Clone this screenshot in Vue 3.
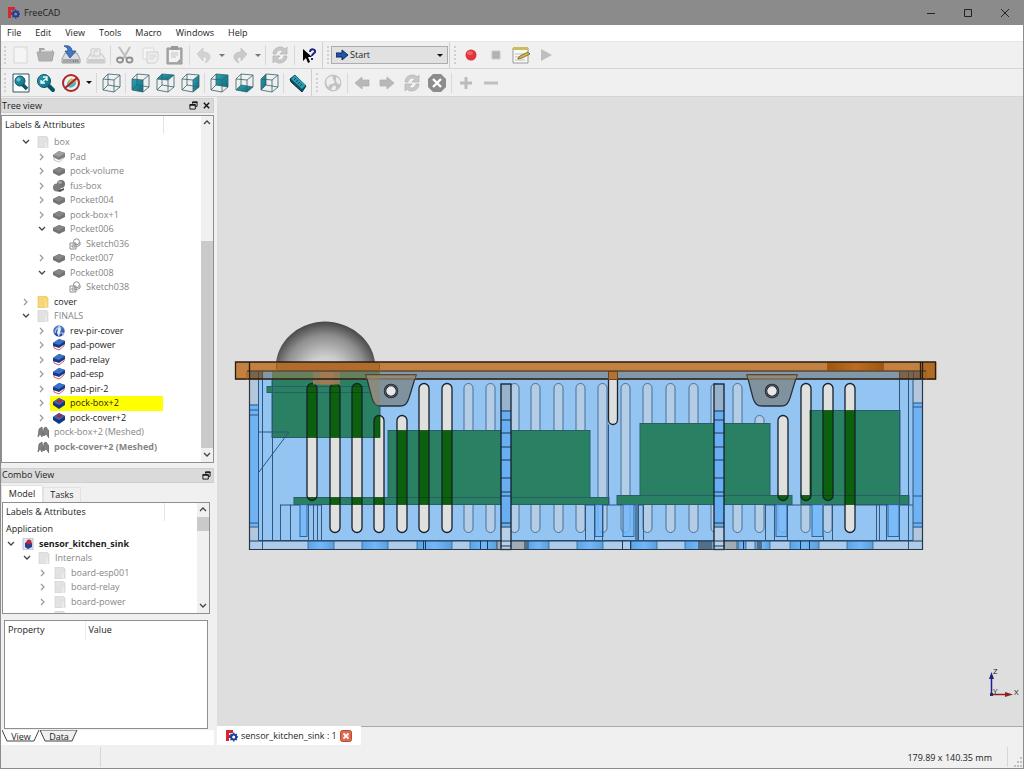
<script setup>
import { ref } from 'vue'

const menus = ['File', 'Edit', 'View', 'Tools', 'Macro', 'Windows', 'Help']

const fileTools = ['new', 'open', 'save', 'saveas', '|', 'cut', 'copy', 'paste', '|', 'undo', 'v', 'redo', 'v', '|', 'refresh', '|', 'whats']
const macroTools = ['record', 'stop', 'edit', 'play']
const viewTools = ['fit', 'zoom', 'nodraw', 'V', '|', 'iso', '|', 'front', 'top', 'right', '|', 'rear', 'bottom', 'left', '|', 'measure']
const webTools = ['globe', '|', 'back', 'forward', 'refresh', 'close', '|', 'plus', 'minus']

const tree = [
  { d: 1, open: true, icon: 'folderGrey', t: 'box', off: true },
  { d: 2, icon: 'padGrey', t: 'Pad', off: true },
  { d: 2, icon: 'pockGrey', t: 'pock-volume', off: true },
  { d: 2, icon: 'fuse', t: 'fus-box', off: true },
  { d: 2, icon: 'pockGrey', t: 'Pocket004', off: true },
  { d: 2, icon: 'pockGrey', t: 'pock-box+1', off: true },
  { d: 2, open: true, icon: 'pockGrey', t: 'Pocket006', off: true },
  { d: 3, leaf: true, icon: 'sketch', t: 'Sketch036', off: true },
  { d: 2, icon: 'pockGrey', t: 'Pocket007', off: true },
  { d: 2, open: true, icon: 'pockGrey', t: 'Pocket008', off: true },
  { d: 3, leaf: true, icon: 'sketch', t: 'Sketch038', off: true },
  { d: 1, icon: 'folder', t: 'cover' },
  { d: 1, open: true, icon: 'folderGrey', t: 'FINALS', off: true },
  { d: 2, icon: 'rev', t: 'rev-pir-cover' },
  { d: 2, icon: 'pad', t: 'pad-power' },
  { d: 2, icon: 'pad', t: 'pad-relay' },
  { d: 2, icon: 'pad', t: 'pad-esp' },
  { d: 2, icon: 'pad', t: 'pad-pir-2' },
  { d: 2, icon: 'pock', t: 'pock-box+2', hot: true },
  { d: 2, icon: 'pock', t: 'pock-cover+2' },
  { d: 1, leaf: true, icon: 'mesh', t: 'pock-box+2 (Meshed)', off: true },
  { d: 1, leaf: true, icon: 'mesh', t: 'pock-cover+2 (Meshed)', off: true, bold: true }
]

const model = [
  { d: 0, open: true, icon: 'doc', t: 'sensor_kitchen_sink', bold: true },
  { d: 1, open: true, icon: 'folderGrey', t: 'Internals', off: true },
  { d: 2, icon: 'folderGrey', t: 'board-esp001', off: true },
  { d: 2, icon: 'folderGrey', t: 'board-relay', off: true },
  { d: 2, icon: 'folderGrey', t: 'board-power', off: true },
  { d: 2, open: true, icon: 'folderGrey', t: 'board-pir', off: true }
]

const workbench = ref('Start')

// Vent slots: centre x, top, bottom
const cutSlots = [
  [312, 383, 500], [335, 383, 532], [357, 383, 532], [379, 415, 532], [402, 415, 532],
  [424, 383, 532], [447, 383, 532], [783, 415, 500], [806, 383, 500], [828, 383, 500], [850, 383, 532]
]
const farSlots = [469, 491, 515, 536, 559, 581, 603, 626, 648, 671, 694, 716, 738]
  .map(x => [x, 383, 532]).concat([[760, 415, 532], [783, 470, 532], [806, 470, 532], [828, 470, 532]])

// Circuit boards: x, y, width, height
const boards = [
  [272, 371, 108, 66], [267, 386, 113, 6], [388, 430, 202, 67], [294, 497, 315, 7],
  [640, 423, 130, 72], [617, 495, 175, 9], [810, 410, 90, 85], [801, 495, 108, 9]
]
const posts = [501, 714]
const rungs = [410, 419, 432, 446, 459, 477, 491, 495, 522, 526, 540, 545]
const feet = [[308, 26], [362, 26], [417, 35], [470, 27], [528, 21], [577, 26], [631, 26], [685, 27], [738, 8], [755, 15], [790, 29], [847, 26]]
const hubs = [390, 771]
const ribs = [280, 290, 308, 313, 317, 321, 585, 594, 602, 638, 643, 765, 774, 787, 823, 832, 876, 879, 886]
const clips = [[300, 7], [595, 8], [623, 11], [776, 11], [812, 11], [888, 11]]
</script>

<template>
  <svg class="defs" aria-hidden="true">
    <defs>
      <linearGradient id="gBlue" x1="0" y1="0" x2="0" y2="1"><stop offset="0" stop-color="#5b86cf" /><stop offset="1" stop-color="#1d3f8f" /></linearGradient>
      <linearGradient id="gTeal" x1="0" y1="0" x2="1" y2="1"><stop offset="0" stop-color="#2ea4b6" /><stop offset="1" stop-color="#0b6a7d" /></linearGradient>
    </defs>
    <symbol id="i-logo" viewBox="0 0 12 12"><path d="M0 0h7v3H3v2h3v3H3v3H0z" fill="#d8262c" /><g fill="none" stroke="#1f3f9c"><circle cx="7.700" cy="7" r="2.500" stroke-width="2" /><path d="M7.700 2.500v9M3.200 7h9M4.500 3.800l6.400 6.400M4.500 10.200l6.400-6.400" stroke-width="1.300" stroke-dasharray="1.500 6" /></g></symbol>
    <symbol id="i-new" viewBox="0 0 20 20"><path d="M3 2h13v16H3z" fill="#f5f5f5" stroke="#d6d6d6" /><path d="M12 2l4 4" stroke="#e2e2e2" /></symbol>
    <symbol id="i-open" viewBox="0 0 20 20"><path d="M3 15V3h5l1 2h8v10z" fill="#a5a5a5" /><path d="M5 5h11v5H5z" fill="#e2e2e2" /><path d="M1 7h17l-2 9H3z" fill="#b2b2b2" stroke="#a8a8a8" /></symbol>
    <symbol id="i-save" viewBox="0 0 20 20"><path d="M4 8h12l3 6v4H1v-4z" fill="#dcdcdc" stroke="#9d9d9d" /><path d="M2 14h16v4H2z" fill="#a3a8ad" /><path d="M12 16h5" stroke="#666" stroke-dasharray="1 1" /><path d="M3 1c5-1 8 1 8 5h4l-6 7-5-7h3c0-2-1-4-4-5z" fill="#4478bc" stroke="#245092" stroke-width=".8" /></symbol>
    <symbol id="i-saveas" viewBox="0 0 20 20"><path d="M4 9h12l3 5v4H1v-4z" fill="#eaeaea" stroke="#c6c6c6" /><path d="M2 14h16v4H2z" fill="#cecece" /><path d="M5 4h9v7H5zM8 11V6h4" fill="#eee" stroke="#cacaca" /></symbol>
    <symbol id="i-cut" viewBox="0 0 20 20"><path d="M4 2l8 12M15 2L8 14" stroke="#bdbdbd" stroke-width="2" /><g fill="none" stroke="#8f8f8f" stroke-width="1.800"><ellipse cx="5" cy="15" rx="3" ry="2.500" /><ellipse cx="14.500" cy="15" rx="3" ry="2.500" /></g></symbol>
    <symbol id="i-copy" viewBox="0 0 20 20"><path d="M3 3h11v11H3z" fill="#f5f5f5" stroke="#dadada" /><path d="M7 7h11v8l-3 3H7z" fill="#efefef" stroke="#cecece" /><path d="M9 10h7M9 12h7M9 14h5" stroke="#d6d6d6" /></symbol>
    <symbol id="i-paste" viewBox="0 0 20 20"><path d="M2 3h15v16H2z" fill="#aaa" stroke="#969696" /><path d="M4 5h11v12H4z" fill="#f2f2f2" /><path d="M6 1h7v4H6z" fill="#999" /><path d="M6 8h7M6 10h7M6 12h5" stroke="#c6c6c6" /><path d="M12 17l3-3v3z" fill="#999" /></symbol>
    <symbol id="i-undo" viewBox="0 0 20 20"><path d="M9 3v4c9 0 9 8 2 11 3-5 1-6-2-6v4L3 9z" fill="#d2d2d2" stroke="#c8c8c8" stroke-width=".7" /></symbol>
    <symbol id="i-redo" viewBox="0 0 20 20"><path d="M11 3v4c-9 0-9 8-2 11-3-5-1-6 2-6v4l6-7z" fill="#cacaca" stroke="#bfbfbf" stroke-width=".7" /></symbol>
    <symbol id="i-refresh" viewBox="0 0 20 20"><g fill="#c8c8c8" stroke="#b2b2b2" stroke-width=".7"><path d="M3 9c0-7 9-9 12-5l2-2v7h-7l3-3c-3-2-6-1-7 3z" /><path d="M17 11c0 7-9 9-12 5l-2 2v-7h7l-3 3c3 2 6 1 7-3z" /></g></symbol>
    <symbol id="i-whats" viewBox="0 0 20 20"><path d="M4 4v12l3-3 2 5 2-1-2-5h4z" fill="#000" /><path d="M11 7c0-4 6-3 5 0-1 2-3 2-3 4M13 13v2" fill="none" stroke="#20207c" stroke-width="2" /></symbol>
    <symbol id="i-record" viewBox="0 0 20 20"><circle cx="10" cy="10" r="5.500" fill="#e0353a" /><ellipse cx="9" cy="8" rx="3" ry="2" fill="#ec6467" /></symbol>
    <symbol id="i-stop" viewBox="0 0 20 20"><path d="M6 6h8v8H6z" fill="#b2b2b2" stroke="#c9c9c9" /></symbol>
    <symbol id="i-edit" viewBox="0 0 20 20"><path d="M2 3h15v15H2z" fill="#f8f8f6" stroke="#999" /><path d="M2 2h15v3H2z" fill="#c9bd5c" /><path d="M4 9h11M4 12h9M4 15h10" stroke="#bbb" /><path d="M7 13l2-2 8-4 2 2-8 4-4 1z" fill="#dfb546" stroke="#5f4d1f" stroke-width=".7" /></symbol>
    <symbol id="i-play" viewBox="0 0 20 20"><path d="M5 4l11 6-11 6z" fill="#bebebe" /></symbol>
    <symbol id="i-fit" viewBox="0 0 20 20"><path d="M2 1h16v18H2z" fill="#fff" stroke="#2c5965" /><path d="M11 11l5 5" stroke="#0b5264" stroke-width="3.500" /><circle cx="9" cy="8" r="5" fill="url(#gTeal)" stroke="#0b5264" /><circle cx="7.500" cy="6.500" r="2" fill="#69c1cb" /></symbol>
    <symbol id="i-zoom" viewBox="0 0 20 20"><path d="M12 12l5 5" stroke="#0b5264" stroke-width="4" stroke-linecap="round" /><circle cx="8" cy="8" r="6.500" fill="url(#gTeal)" stroke="#0b5264" /><path d="M5 10l6-5M7 4h4v4M5 7v3h4" fill="none" stroke="#e9ffff" stroke-width="1.300" /></symbol>
    <symbol id="i-nodraw" viewBox="0 0 20 20"><path d="M6 12c0-7 9-8 9-2 0 4-8 7-9 2z" fill="#43b5c4" /><path d="M5 14l5-9 6 3z" fill="#ddb743" /><circle cx="10" cy="10" r="8" fill="none" stroke="#a8282c" stroke-width="2" /><path d="M4 15L16 5" stroke="#a8282c" stroke-width="2.200" /></symbol>
    <symbol v-for="(face, name) in {
      iso: '', front: 'M2 6l11 1v12L2 17z', top: 'M7 1l12 1-6 5L2 6z', right: 'M13 7l6-5v12l-6 5z',
      rear: 'M7 1l12 1v12L7 12z', bottom: 'M7 12l12 2-6 5-11-2z', left: 'M7 1v11l-5 5V6z' }"
      :id="'i-' + name" :key="name" viewBox="0 0 20 20">
      <path :d="face" fill="url(#gTeal)" />
      <path d="M7 1l12 1-6 5L2 6zM2 6v11l11 2 6-5V2M13 7v12M7 1v11l12 2M7 12l-5 5" fill="none" stroke="#35616b" stroke-width=".8" />
    </symbol>
    <symbol id="i-measure" viewBox="0 0 20 20"><path d="M2 6l5-4 11 11-4 6L3 9z" fill="#0b5060" stroke="#083844" /><path d="M3 6l4-4 11 10-4 4z" fill="#2c9aab" /><path d="M8 5l-2 2M10 7l-2 2M12 9l-2 2M14 11l-2 2" stroke="#0b4b59" /></symbol>
    <symbol id="i-globe" viewBox="0 0 20 20"><circle cx="10" cy="10" r="8" fill="#c2c2c2" stroke="#c6c6c6" /><path d="M4 6c2-3 6-4 6-1s3 3 1 5-4 0-5 3-4-3-2-7zM13 4c3 1 5 4 4 7-2 1-4-2-4-4zM10 13c3-1 4 1 2 4H8z" fill="#eee" /></symbol>
    <symbol id="i-back" viewBox="0 0 20 20"><path d="M3 10l7-6v3h7v6h-7v3z" fill="#b8b8b8" stroke="#acacac" stroke-width=".7" /></symbol>
    <symbol id="i-forward" viewBox="0 0 20 20"><path d="M17 10l-7-6v3H3v6h7v3z" fill="#b8b8b8" stroke="#acacac" stroke-width=".7" /></symbol>
    <symbol id="i-close" viewBox="0 0 20 20"><path d="M6 1h8l5 5v8l-5 5H6l-5-5V6z" fill="#8c8c8c" /><path d="M6 6l8 8M14 6l-8 8" stroke="#fff" stroke-width="2.400" /></symbol>
    <symbol id="i-plus" viewBox="0 0 20 20"><path d="M10 4v12M4 10h12" stroke="#bbb" stroke-width="3" /></symbol>
    <symbol id="i-minus" viewBox="0 0 20 20"><path d="M3 10h14" stroke="#bfbfbf" stroke-width="3" /></symbol>
    <symbol id="i-start" viewBox="0 0 12 12"><path d="M0 4h6V1l6 5-6 5V8H0z" fill="#1d55b4" stroke="#10284f" /></symbol>

    <symbol id="i-folderGrey" viewBox="0 0 12 12"><path d="M1 0h8l2 2v10H1z" fill="#e2e2e2" stroke="#cdcdcd" stroke-width=".6" /><path d="M9 6v6h2" fill="none" stroke="#f3f3f3" /></symbol>
    <symbol id="i-folder" viewBox="0 0 12 12"><path d="M1 0h8l2 2v10H1z" fill="#f6d77b" stroke="#e3bd52" stroke-width=".6" /><path d="M9 6v6h2" fill="none" stroke="#fbe9ae" /></symbol>
    <symbol id="i-padGrey" viewBox="0 0 12 12"><path d="M1 7v2l5 2 5-4V5z" fill="#fff" stroke="#b5b5b5" stroke-width=".8" /><path d="M0 4l6-4 6 2v4L6 9 0 6z" fill="#808080" /><path d="M0 4l6-4 6 2-6 4z" fill="#a0a0a0" /></symbol>
    <symbol id="i-pockGrey" viewBox="0 0 12 12"><path d="M0 5l6-3 6 2v4l-6 3-6-3z" fill="#737373" /><path d="M0 5l6-3 6 2-6 4z" fill="#868686" /></symbol>
    <symbol id="i-fuse" viewBox="0 0 12 12"><circle cx="8" cy="4" r="4" fill="#737373" /><circle cx="4" cy="7.500" r="4" fill="#7d7d7d" /><path d="M4 11l7-3v2l-4 2z" fill="#555" /><ellipse cx="7" cy="2.500" rx="2" ry="1.200" fill="#b0b0b0" /></symbol>
    <symbol id="i-sketch" viewBox="0 0 12 12"><g fill="none" stroke="#8c8c8c"><path d="M1 5h6v6H1z" /><circle cx="7.500" cy="3.800" r="3" /><path d="M7 9l4-2V4M3 7h3v2H3z" /></g></symbol>
    <symbol id="i-rev" viewBox="0 0 12 12"><circle cx="6" cy="6" r="5.700" fill="url(#gBlue)" /><path d="M6 0l2 4-2 8-2-4z" fill="#eaf0ff" /><path d="M2 8c0-4 3-6 6-5M7 8h3v3" fill="none" stroke="#bdd2fa" stroke-width="1.200" /></symbol>
    <symbol id="i-pad" viewBox="0 0 12 12"><path d="M1 7v2l5 2 5-4V5z" fill="#fff" stroke="#cf4a55" stroke-width=".9" /><path d="M0 4l6-4 6 2v3L6 9 0 7z" fill="#153a8a" /><path d="M0 4l6-4 6 2-6 4z" fill="#3a72c8" /></symbol>
    <symbol id="i-pock" viewBox="0 0 12 12"><path d="M0 5l6-4 6 3v4l-6 4-6-4z" fill="#12377f" /><path d="M0 5l6-4 6 3-6 4z" fill="#3767b5" /><path d="M3 4l4-2 3 2-4 2z" fill="#b52338" /></symbol>
    <symbol id="i-mesh" viewBox="0 0 12 12"><path d="M1 11l1-8 3-2 1 6-1 4-2-3zM6 9l1-7 2-1 3 4v7l-3-4-2 2z" fill="#808080" stroke="#555" stroke-width=".6" /></symbol>
    <symbol id="i-doc" viewBox="0 0 12 12"><path d="M1 0h10v12H1z" fill="#dfe2ef" stroke="#aab" stroke-width=".6" /><path d="M3 5l3-2 4 2v4l-4 2-3-2z" fill="#24418f" /><circle cx="7" cy="4" r="2.500" fill="#c02838" /></symbol>
    <symbol id="i-dn" viewBox="0 0 10 10"><path d="M2 3l3 3 3-3" fill="none" stroke="#444" stroke-width="1.300" /></symbol>
    <symbol id="i-rt" viewBox="0 0 10 10"><path d="M3 2l3 3-3 3" fill="none" stroke="#999" stroke-width="1.200" /></symbol>
    <symbol id="i-up" viewBox="0 0 10 10"><path d="M2 6l3-3 3 3" fill="none" stroke="#444" stroke-width="1.300" /></symbol>
    <symbol id="i-float" viewBox="0 0 10 10"><path d="M4 1h5v5H7M4 3V1M1 4h6v5H1z" fill="none" stroke="#111" /><path d="M4 1h5v1H4zM1 4h6v1H1z" fill="#111" stroke="#111" stroke-width=".5" /></symbol>
    <symbol id="i-x" viewBox="0 0 10 10"><path d="M2 2l6 6M8 2L2 8" stroke="#111" stroke-width="1.500" /></symbol>
  </svg>

  <div class="window">
    <header class="titlebar">
      <svg class="logo"><use href="#i-logo" /></svg>
      <span class="apptitle">FreeCAD</span>
      <button class="winbtn" aria-label="Minimize"><svg viewBox="0 0 10 10"><path d="M1 5.500h8" stroke="#222" /></svg></button>
      <button class="winbtn" aria-label="Maximize"><svg viewBox="0 0 10 10"><path d="M1.500 1.500h7v7h-7z" fill="none" stroke="#222" /></svg></button>
      <button class="winbtn" aria-label="Close"><svg viewBox="0 0 10 10"><path d="M1 1l8 8M9 1L1 9" stroke="#222" /></svg></button>
    </header>

    <nav class="menubar">
      <button v-for="m in menus" :key="m">{{ m }}</button>
    </nav>

    <div class="toolrow">
      <div class="toolbar">
        <template v-for="(t, i) in fileTools" :key="i">
          <i v-if="t === '|'" class="sep"></i>
          <button v-else-if="t === 'v'" class="arrow" aria-label="More"></button>
          <button v-else class="tool" :aria-label="t"><svg><use :href="'#i-' + t" /></svg></button>
        </template>
      </div>
      <div class="toolbar">
        <label class="combo">
          <svg><use href="#i-start" /></svg>
          <select v-model="workbench" aria-label="Workbench"><option>Start</option></select>
        </label>
      </div>
      <div class="toolbar">
        <button v-for="t in macroTools" :key="t" class="tool" :aria-label="t"><svg><use :href="'#i-' + t" /></svg></button>
      </div>
    </div>
    <div class="toolrow">
      <div class="toolbar">
        <template v-for="(t, i) in viewTools" :key="i">
          <i v-if="t === '|'" class="sep"></i>
          <button v-else-if="t === 'V'" class="arrow dark" aria-label="More"></button>
          <button v-else class="tool" :aria-label="t"><svg><use :href="'#i-' + t" /></svg></button>
        </template>
      </div>
      <div class="toolbar">
        <template v-for="(t, i) in webTools" :key="i">
          <i v-if="t === '|'" class="sep"></i>
          <button v-else class="tool" :aria-label="t"><svg><use :href="'#i-' + t" /></svg></button>
        </template>
      </div>
    </div>

    <main class="work">
      <aside class="docks">
        <section class="dock treedock">
          <h2 class="docktitle"><span>Tree view</span>
            <button aria-label="Float"><svg><use href="#i-float" /></svg></button>
            <button aria-label="Close"><svg><use href="#i-x" /></svg></button>
          </h2>
          <div class="pane">
            <div class="panebody">
              <div class="colhead">Labels &amp; Attributes</div>
              <ul class="tree">
                <li v-for="n in tree" :key="n.t" :class="['d' + n.d, { off: n.off, bold: n.bold, hot: n.hot }]">
                  <button class="twist" :aria-label="n.leaf ? 'Item' : 'Toggle'"><svg v-if="!n.leaf"><use :href="n.open ? '#i-dn' : '#i-rt'" /></svg></button>
                  <span class="node"><svg><use :href="'#i-' + n.icon" /></svg>{{ n.t }}</span>
                </li>
              </ul>
            </div>
            <div class="scroll low">
              <button aria-label="Scroll up"><svg><use href="#i-up" /></svg></button>
              <div class="track"><i></i></div>
              <button aria-label="Scroll down"><svg><use href="#i-dn" /></svg></button>
            </div>
          </div>
        </section>

        <section class="dock combodock">
          <h2 class="docktitle"><span>Combo View</span>
            <button aria-label="Float"><svg><use href="#i-float" /></svg></button>
          </h2>
          <div class="tabs"><button class="on">Model</button><button>Tasks</button></div>
          <div class="pane modelpane">
            <div class="panebody">
              <div class="colhead">Labels &amp; Attributes</div>
              <ul class="tree">
                <li class="root">Application</li>
                <li v-for="n in model" :key="n.t" :class="['d' + n.d, { off: n.off, bold: n.bold }]">
                  <button class="twist" aria-label="Toggle"><svg><use :href="n.open ? '#i-dn' : '#i-rt'" /></svg></button>
                  <span class="node"><svg><use :href="'#i-' + n.icon" /></svg>{{ n.t }}</span>
                </li>
              </ul>
            </div>
            <div class="scroll high">
              <button aria-label="Scroll up"><svg><use href="#i-up" /></svg></button>
              <div class="track"><i></i></div>
              <button aria-label="Scroll down"><svg><use href="#i-dn" /></svg></button>
            </div>
          </div>
          <div class="props">
            <table><thead><tr><th>Property</th><th>Value</th></tr></thead></table>
          </div>
          <div class="foottabs">
            <button><svg viewBox="0 0 38 12" preserveAspectRatio="none"><path d="M0 0l5 11h27l5-11" fill="#fff" stroke="#444" /></svg><span>View</span></button>
            <button><svg viewBox="0 0 38 12" preserveAspectRatio="none"><path d="M0 0l5 11h27l5-11z" fill="#f0f0f0" stroke="#444" /></svg><span>Data</span></button>
          </div>
        </section>
      </aside>

      <section class="mdi">
        <div class="view3d">
          <svg class="scene" viewBox="217 97 806 628" preserveAspectRatio="xMidYMid meet" role="img" aria-label="3D model">
            <defs>
              <radialGradient id="dome" gradientUnits="userSpaceOnUse" cx="325" cy="376" r="57">
                <stop offset="0" stop-color="#dedede" /><stop offset=".35" stop-color="#cdcdcd" /><stop offset=".72" stop-color="#8f8f8f" /><stop offset="1" stop-color="#3c3c3c" />
              </radialGradient>
              <linearGradient id="foot"><stop offset="0" stop-color="#5aa4e8" /><stop offset=".5" stop-color="#72b7fa" /><stop offset="1" stop-color="#5c9fdd" /></linearGradient>
              <linearGradient id="boss"><stop offset="0" stop-color="#a0560f" /><stop offset=".5" stop-color="#ba6c20" /><stop offset="1" stop-color="#a0560f" /></linearGradient>
              <clipPath id="cuts"><rect v-for="s in cutSlots" :key="s[0]" :x="s[0] - 5" :y="s[1]" width="10" :height="s[2] - s[1]" rx="5" /></clipPath>
            </defs>
            <path d="M276 362c3-25 26-41 49-41s47 16 50 41z" fill="url(#dome)" />

            <rect x="249" y="371" width="673" height="178" fill="#94c5f2" />
            <rect x="249" y="371" width="9" height="178" fill="#b3c6dc" />
            <rect x="913" y="371" width="9" height="178" fill="#b3c6dc" />
            <rect x="249" y="540" width="673" height="9" fill="#aecbe9" />
            <rect x="249" y="404" width="9" height="122" fill="#70b3f5" />
            <rect x="913" y="402" width="9" height="125" fill="#70b3f5" />

            <g fill="#b3cde7" stroke="#4a6f94" stroke-width="1">
              <rect v-for="(s, i) in farSlots" :key="i" :x="s[0] - 5" :y="s[1]" width="9" :height="s[2] - s[1]" rx="4.500" />
            </g>
            <g fill="#94c5f2"><rect x="608" y="379" width="9" height="161" /><path d="M774 440h58v52h-58z" /></g>

            <g fill="#2a8062" stroke="#265f66" stroke-width="1">
              <rect v-for="(b, i) in boards" :key="i" :x="b[0]" :y="b[1]" :width="b[2]" :height="b[3]" />
            </g>

            <g stroke="#2c567f" fill="none">
              <path d="M258.500 371v169H913V371M262.500 371v178M272.500 371v169M899.500 371v169M908.500 371v178" />
              <path d="M259 431.500h30l-30 40M249 404.500h9M249 409.500h9M249 414.500h9M249 522.500h9M249 526.500h9M913 402.500h9M913 406.500h9M913 495.500h9M913 522.500h9M913 526.500h9" />
              <path d="M608.500 424v80M280.500 504.500H322M585.500 504.500H643M765.500 504.500H913" />
            </g>
            <g fill="#72b7fa" fill-opacity=".8" stroke="#2f659c"><rect v-for="c in clips" :key="c[0]" :x="c[0]" y="504" :width="c[1]" height="32" /></g>
            <path v-for="r in ribs" :key="r" :d="`M${r}.5 504v36`" stroke="#294d70" stroke-width=".9" />
            <path d="M635 504h3v36h-3zM822 504h2v32h-2z" fill="#4f7ca6" />

            <rect v-for="f in feet" :key="f[0]" :x="f[0]" y="540" :width="f[1]" height="9" fill="url(#foot)" stroke="#35648f" stroke-width=".8" />
            <path d="M497 540h31v9h-31zM724 540h13v9h-13z" fill="#a3abb5" stroke="#4b5968" />
            <path d="M524 540h4v9h-4zM698 540h14v9h-14zM757 540h5v9h-5z" fill="#526f8a" />
            <path d="M423.500 540v9M425.500 540v9M480.500 540v9M487.500 540v9M622.500 540v9M630.500 540v9M743.500 540v9M800.500 540v9M809.500 540v9M249 540.500h673" stroke="#1d3c5c" />

            <g clip-path="url(#cuts)">
              <rect x="300" y="380" width="560" height="155" fill="#e0e0de" />
              <rect v-for="(b, i) in boards" :key="i" :x="b[0]" :y="b[1]" :width="b[2]" :height="b[3]" fill="#0c610e" stroke="#0a3f0a" stroke-width=".7" />
            </g>
            <g fill="none" stroke="#15212a" stroke-width="1.300">
              <rect v-for="s in cutSlots" :key="s[0]" :x="s[0] - 5" :y="s[1]" width="10" :height="s[2] - s[1]" rx="5" />
            </g>

            <g v-for="p in posts" :key="p">
              <rect :x="p" y="383" width="10" height="27" fill="#99b2cb" />
              <rect :x="p" y="410" width="10" height="130" fill="#69aef0" />
              <rect :x="p" y="526" width="10" height="23" fill="#b8cfe7" />
              <path v-for="r in rungs" :key="r" :d="`M${p} ${r}.5h10`" stroke="#1a3654" />
              <rect :x="p" y="383.500" width="10" height="165.500" fill="none" stroke="#10202f" stroke-width="1.300" />
            </g>

            <path d="M249.500 379v170h673V379" fill="none" stroke="#26394a" stroke-width="1.200" />

            <rect x="247" y="370" width="679" height="9" fill="#8297a8" />
            <rect x="272" y="371" width="108" height="8" fill="#667f5c" />
            <rect x="313" y="371" width="27" height="13" fill="#8d7c5c" />
            <rect x="320" y="371" width="14" height="13" fill="#a07b55" />
            <path d="M249 371h14v8h-14zM899 371h27v8h-27z" fill="#79654f" />
            <path d="M258.500 371v8M262.500 371v8M899.500 371v8M908.500 371v8M913.500 371v8" stroke="#654625" />
            <path d="M235.500 361.500h701V379h-14v-9H249v9h-13.500z" fill="#c28041" />
            <rect x="276" y="362" width="103" height="8" fill="#b06c2c" />
            <rect x="827" y="362" width="57" height="8" fill="url(#boss)" />
            <path d="M922 362h14v17h-14z" fill="#b06b25" />
            <path d="M247 370.500h679" stroke="#5d4226" stroke-width="1.500" />
            <path d="M235.500 361.500h700v17h-700zM249.500 361v18M920.500 361v18M922.500 361v18" fill="none" stroke="#281c10" stroke-width="1.300" />
            <path d="M247 371v8M926 371v8M379.500 362v9M276.500 362v9" stroke="#9b5c1e" />

            <path d="M608.500 379v40a4.500 5 0 0 0 9 0v-40" fill="#dedede" stroke="#1c242b" stroke-width="1.300" />
            <path d="M608.500 371h9v8h-9z" fill="#b07237" stroke="#6c421a" />

            <g v-for="h in hubs" :key="h">
              <path :d="`M${h - 24} 374.500h50l-7 23c-2 6-4 8-9 8h-19c-5 0-7-2-9-8z`" fill="#81929f" stroke="#28323b" stroke-width="1.300" />
              <path :d="`M${h - 24} 374.500h50l-1 4h-48z`" fill="#8f8b7e" stroke="#744c27" stroke-width=".8" />
              <circle :cx="h + 1" cy="390.500" r="6" fill="#e8e8e8" stroke="#1d2227" stroke-width="2.500" />
              <circle :cx="h + 1" cy="390.500" r="6" fill="none" stroke="#8293a0" stroke-width=".6" />
            </g>
            <path d="M380 375v30h-4c-4-4-6-18-9-30z" fill="#8f8560" fill-opacity=".5" />
          </svg>
          <svg class="axes" viewBox="0 0 36 36">
            <path d="M8.500 28V12" stroke="#20208c" stroke-width="1.500" /><path d="M6 13l2.500-7 2.500 7z" fill="#20208c" />
            <path d="M8 28.500h16" stroke="#8c2222" stroke-width="1.500" /><path d="M22 26l8 2.500-8 2.500z" fill="#8c2222" />
            <rect x="7" y="27" width="3" height="3" fill="#235" />
            <text x="10" y="8">Z</text><text x="10" y="28">Y</text><text x="31" y="29">X</text>
          </svg>
        </div>
        <div class="doctabs">
          <div class="doctab">
            <svg class="logo"><use href="#i-logo" /></svg><span>sensor_kitchen_sink : 1</span>
            <button aria-label="Close document"><svg viewBox="0 0 12 12"><rect x=".5" y=".5" width="11" height="11" rx="2" fill="#e0694c" stroke="#b94a35" /><path d="M3.500 3.500l5 5M8.500 3.500l-5 5" stroke="#fff" stroke-width="1.800" /></svg></button>
          </div>
        </div>
      </section>
    </main>

    <footer class="status">
      <div class="cell"></div>
      <output>179.89 x 140.35 mm</output>
      <svg viewBox="0 0 12 12"><path d="M9 2h2M6 6h2M9 6h2M3 10h2M6 10h2M9 10h2" stroke="#c0c0c0" stroke-width="2" /></svg>
    </footer>
  </div>
</template>

<style>
body { margin: 0; }
</style>

<style scoped>
* { box-sizing: border-box; }
.defs { position: absolute; width: 0; height: 0; }
.window {
  display: flex; flex-direction: column; height: 100vh; min-height: 560px;
  background: #f0f0f0; color: #1c1c1c; border: 1px solid #8b8b8b; border-top: 0;
  font: 9px/12px "Open Sans", "Noto Sans", sans-serif;
}
button { font: inherit; color: inherit; background: none; border: 0; padding: 0; margin: 0; }
svg { display: block; flex: none; }

.titlebar { display: flex; align-items: center; height: 25px; background: #8b8b8b; padding-left: 7px; flex: none; }
.logo { width: 12px; height: 12px; }
.apptitle { flex: 1; margin-left: 4px; }
.winbtn { width: 37px; height: 24px; display: grid; place-items: center; }
.winbtn svg { width: 10px; height: 10px; }

.menubar { display: flex; height: 17px; background: #fff; padding-left: 6px; gap: 14px; flex: none; border-bottom: 1px solid #e6e6e6; }

.toolrow { display: flex; height: 27px; flex: none; border-bottom: 1px solid #d5d5d5; }
.toolrow + .toolrow { height: 28px; }
.toolbar { display: flex; align-items: center; padding-left: 7px; position: relative; margin-right: 1px; }
.toolbar:not(:last-child) { border-right: 1px solid #cfcfcf; padding-right: 1px; }
.toolbar::before { content: ""; position: absolute; left: 3px; top: 4px; bottom: 4px; border-left: 2px dotted #d0d0d0; }
.tool { width: 25px; height: 24px; display: grid; place-items: center; }
.tool svg { width: 20px; height: 20px; }
.sep { width: 1px; height: 20px; background: #d9d9d9; margin: 0 1px 0 2px; }
.arrow { width: 11px; height: 20px; display: grid; place-items: center; }
.arrow::before { content: ""; border: 3px solid transparent; border-top-color: #777; border-bottom: 0; }
.arrow.dark::before { border-top-color: #111; }
.combo { display: flex; align-items: center; width: 117px; height: 18px; background: #e1e1e1; border: 1px solid #adadad; padding: 0 4px; }
.combo svg { width: 12px; height: 12px; }
.combo select { flex: 1; font: inherit; color: inherit; appearance: none; background: none; border: 0; padding: 0 0 0 2px; height: 16px; }
.combo::after { content: ""; border: 3px solid transparent; border-top-color: #111; border-bottom: 0; }

.work { flex: 1; display: flex; min-height: 0; }
.docks { width: 213px; flex: none; display: flex; flex-direction: column; margin-right: 3px; }
.dock { display: flex; flex-direction: column; min-height: 0; }
.treedock { flex: 366; padding-top: 1px; }
.combodock { flex: 278; margin-top: 5px; }
.docktitle { display: flex; align-items: center; height: 15px; flex: none; margin: 0 0 2px; font: inherit; background: #dadada; border: 1px solid #cfcfcf; }
.docktitle span { flex: 1; }
.docktitle button { width: 13px; display: grid; place-items: center; }
.docktitle svg { width: 9px; height: 9px; }
.pane { flex: 1; display: flex; min-height: 0; background: #fff; border: 1px solid #8f8f8f; }
.panebody { flex: 1; display: flex; flex-direction: column; min-width: 0; overflow: hidden; }
.colhead { height: 18px; line-height: 18px; padding-left: 3px; width: 162px; border-right: 1px solid #e3e3e3; flex: none; }
.tree { list-style: none; margin: 0; padding: 0; display: flex; flex-direction: column; flex: 1; min-height: 0; }
.treedock .tree { padding: 1px 0 8px; }
.tree li { flex: 1; display: flex; align-items: center; white-space: nowrap; min-height: 0; }
.d1 { padding-left: 16px; }
.d2 { padding-left: 32px; }
.d3 { padding-left: 48px; }
.twist { width: 16px; flex: none; display: grid; place-items: center; }
.twist svg { width: 10px; height: 10px; }
.node { display: flex; align-items: center; gap: 5px; padding-left: 3px; height: 100%; }
.node svg { width: 12px; height: 12px; }
.off { color: #858585; }
.bold { font-weight: 700; }
.hot .node { background: #ff0; width: 113px; }
.root { padding-left: 3px; }
.scroll { width: 12px; display: flex; flex-direction: column; background: #f0f0f0; }
.scroll button { height: 14px; display: grid; place-items: center; }
.scroll svg { width: 10px; height: 10px; }
.track { flex: 1; display: flex; flex-direction: column; }
.track i { background: #cacaca; }
.low .track { justify-content: flex-end; }
.low .track i { height: 65%; }
.high .track i { height: 17%; }

.tabs { display: flex; height: 17px; flex: none; align-items: flex-end; }
.tabs button { width: 38px; height: 15px; border: 1px solid #e2e2e2; border-bottom: 0; }
.tabs .on { background: #fff; width: 42px; height: 17px; }
.modelpane { flex: 112; margin: 0 4px 6px 1px; }
.modelpane .tree { flex: none; height: 103px; padding-top: 1px; }
.props { flex: 109; margin: 0 6px 1px 3px; background: #fff; border: 1px solid #8f8f8f; }
.props table { width: 100%; border-collapse: collapse; table-layout: fixed; }
.props th { font-weight: 400; text-align: left; height: 19px; padding: 0 3px; }
.props th:first-child { width: 80px; border-right: 1px solid #ececec; }
.foottabs { display: flex; height: 15px; flex: none; background: #fff; padding-left: 1px; }
.foottabs button { position: relative; width: 38px; height: 13px; }
.foottabs svg { position: absolute; left: 0; top: 0; width: 38px; height: 12px; }
.foottabs span { position: relative; }

.mdi { flex: 1; display: flex; flex-direction: column; min-width: 0; }
.view3d { flex: 1; position: relative; background: #dedede; min-height: 0; border-bottom: 1px solid #a9a9a9; }
.scene { width: 100%; height: 100%; }
.axes { position: absolute; right: 4px; bottom: 24px; width: 36px; height: 36px; overflow: visible; }
.axes text { font: 8px "Open Sans", sans-serif; fill: #222; }
.doctabs { height: 18px; flex: none; display: flex; }
.doctab { display: flex; align-items: center; background: #fff; padding: 0 9px; gap: 3px; margin-top: -1px; z-index: 1; }
.doctab button svg { width: 12px; height: 12px; }

.status { height: 23px; flex: none; display: flex; align-items: center; }
.cell { width: 100px; height: 20px; border-right: 1px solid #d7d7d7; }
.status output { margin-left: auto; height: 20px; line-height: 22px; padding-right: 15px; border-right: 1px solid #d7d7d7; }
.status svg { width: 12px; height: 12px; align-self: flex-end; margin-left: 3px; }
</style>
